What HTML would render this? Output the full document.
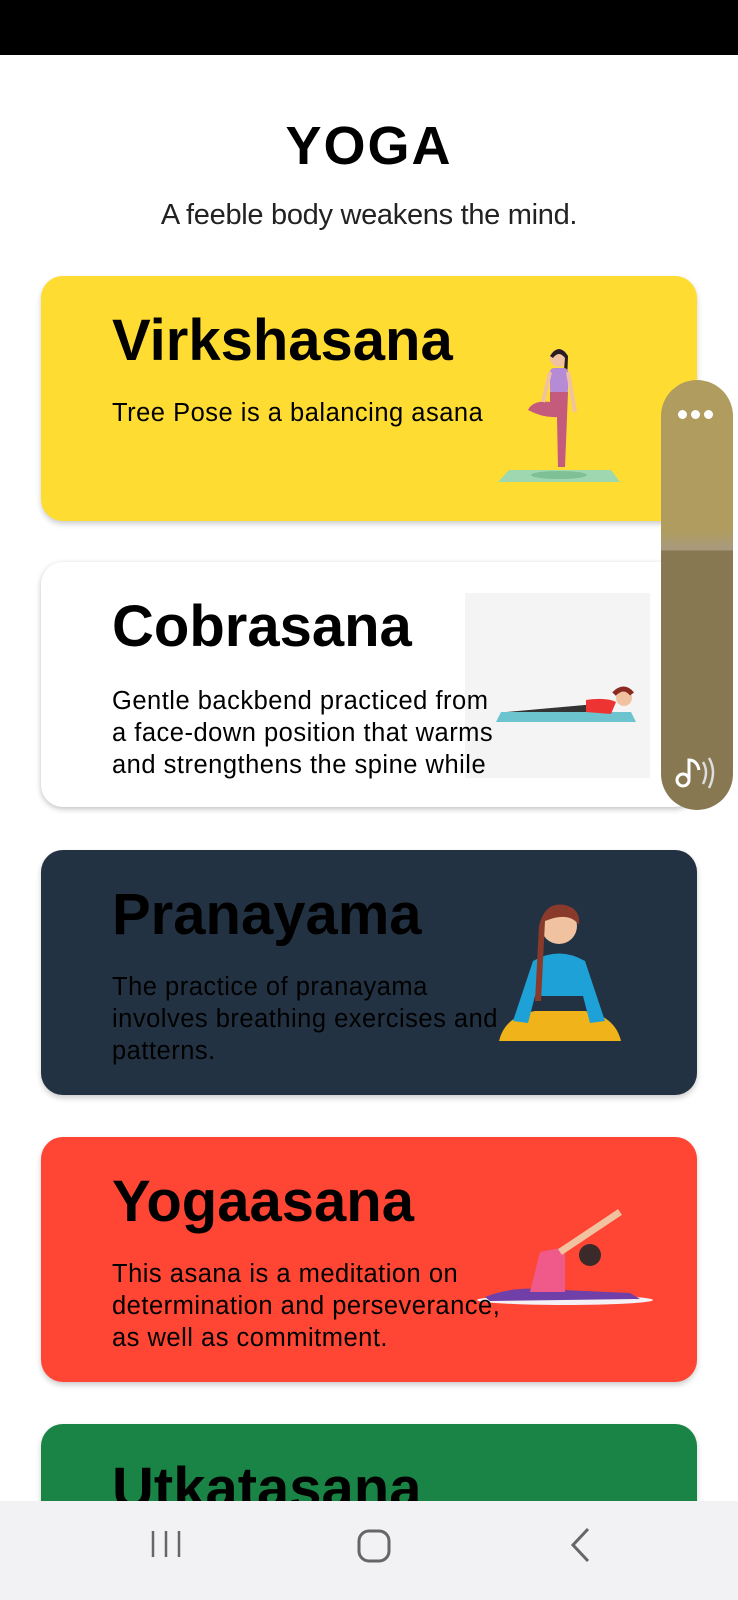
<!DOCTYPE html>
<html style="width:738px;height:1600px;overflow:hidden"><head><meta charset="utf-8"><style>
*{margin:0;padding:0;box-sizing:border-box}
body{width:738px;height:1600px;position:relative;overflow:hidden;background:#fff;font-family:"Liberation Sans",sans-serif}
.abs{position:absolute}
.card{position:absolute;left:41px;width:656px;height:245px;border-radius:22px;box-shadow:0 3px 6px rgba(0,0,0,.2);overflow:hidden}
.t{position:absolute;left:71px;top:31px;font-size:58px;font-weight:bold;color:#000}
.d{position:absolute;left:71px;font-size:25.5px;line-height:32px;color:#000;white-space:nowrap;letter-spacing:0.5px}
</style></head><body>
<div class="abs" style="left:0;top:0;width:738px;height:55px;background:#000"></div>
<div class="abs" style="left:0;top:115px;width:738px;text-align:center;font-size:54px;font-weight:bold;letter-spacing:2px">YOGA</div>
<div class="abs" style="left:0;top:199px;width:738px;text-align:center;font-size:29px;color:#222;letter-spacing:-0.3px">A feeble body weakens the mind.</div>

<div class="card" style="top:276px;background:#fedc32">
<div class="t">Virkshasana</div>
<div class="d" style="top:121px">Tree Pose is a balancing asana</div>
<svg class="abs" style="left:452px;top:66px" width="132" height="145">
<polygon points="5,140 127,140 118,128 16,128" fill="#9fd8b0"/>
<ellipse cx="66" cy="133" rx="28" ry="4" fill="#7fc095"/>
<circle cx="66" cy="16" r="9" fill="#f1c2a0"/><path d="M57 14 Q66 0 75 14 L74 40 L70 40 L72 16 Q66 8 60 16Z" fill="#2a1d1d"/>
<rect x="57" y="26" width="18" height="26" rx="4" fill="#b48bd4"/>
<path d="M57 50 L75 50 L72 125 L65 125 L64 75 Q50 76 35 68 Q40 58 57 60Z" fill="#c45a7c"/>
<path d="M57 30 L50 60 M75 30 L82 70" stroke="#f1c2a0" stroke-width="4"/>
</svg>
</div>

<div class="card" style="top:562px;background:#fff;box-shadow:0 2px 6px rgba(0,0,0,.25)">
<div class="abs" style="left:424px;top:31px;width:185px;height:185px;background:#f4f4f5"></div>
<svg class="abs" style="left:445px;top:120px" width="160" height="45">
<polygon points="10,40 150,40 145,30 15,30" fill="#6cc4cf"/>
<path d="M20 30 L110 22 L120 30 Z" fill="#333"/>
<path d="M100 18 Q120 15 130 20 L125 32 L100 30Z" fill="#e33"/>
<circle cx="138" cy="16" r="8" fill="#f1c2a0"/><path d="M128 12 Q138 2 146 12" stroke="#8a2a20" stroke-width="5" fill="none"/>
</svg>
<div class="t">Cobrasana</div>
<div class="d" style="top:123px;height:100px;overflow:hidden">Gentle backbend practiced from<br>a face-down position that warms<br>and strengthens the spine while<br>opening the chest</div>
</div>

<div class="card" style="top:850px;background:#233243">
<div class="t">Pranayama</div>
<div class="d" style="top:121px">The practice of pranayama<br>involves breathing exercises and<br>patterns.</div>
<svg class="abs" style="left:454px;top:51px" width="130" height="152">
<path d="M4 140 Q10 115 40 110 L90 110 Q120 115 126 140Z" fill="#f0b31a"/>
<path d="M38 60 Q64 45 90 60 L110 120 L95 122 L88 95 L40 95 L33 122 L18 120Z" fill="#1da1d6"/>
<circle cx="64" cy="25" r="18" fill="#f1c2a0"/>
<path d="M44 25 Q50 0 70 4 Q86 8 84 24 Q74 10 50 20 L46 100 L40 100Z" fill="#8a3a2a"/>
</svg>
</div>

<div class="card" style="top:1137px;background:#ff4533">
<div class="t">Yogaasana</div>
<svg class="abs" style="left:429px;top:70px" width="186" height="105">
<ellipse cx="95" cy="93" rx="88" ry="5" fill="#f4f0f4"/>
<path d="M15 90 Q40 80 70 82 L160 86 L170 92 L20 94Z" fill="#7040a8"/>
<path d="M60 85 L70 45 L95 40 L95 85Z" fill="#f05a8a"/>
<path d="M90 45 L150 5" stroke="#f1c2a0" stroke-width="7"/>
<circle cx="120" cy="48" r="11" fill="#3a2a2a"/>
</svg>
<div class="d" style="top:121px">This asana is a meditation on<br>determination and perseverance,<br>as well as commitment.</div>
</div>

<div class="card" style="top:1424px;height:176px;border-radius:22px 22px 0 0;background:#1a8446">
<div class="t">Utkatasana</div>
</div>

<div class="abs" style="left:661px;top:380px;width:72px;height:430px;border-radius:36px;overflow:hidden;background:linear-gradient(#b09c5e,#b09c5e 35%,#a89a80 170px,#877852 171px,#877852)">
<div class="abs" style="left:17px;top:30px;font-size:0">
<span style="display:inline-block;width:9px;height:9px;border-radius:50%;background:#fff;margin-right:4px"></span><span style="display:inline-block;width:9px;height:9px;border-radius:50%;background:#fff;margin-right:4px"></span><span style="display:inline-block;width:9px;height:9px;border-radius:50%;background:#fff"></span></div>
<svg class="abs" style="left:12px;top:372px" width="48" height="40"><circle cx="10" cy="28" r="6" stroke="#fff" stroke-width="3" fill="none"/><path d="M16 28 L16 8 Q24 8 26 18" stroke="#fff" stroke-width="3" fill="none"/><path d="M30 10 Q36 20 30 32 M36 6 Q44 20 36 36" stroke="#ddd" stroke-width="2.5" fill="none"/></svg>
</div>

<div class="abs" style="left:0;top:1501px;width:738px;height:99px;background:#f2f2f4"></div>
<svg class="abs" style="left:0;top:1501px" width="738" height="99">
<path d="M153 30 V56 M166 30 V56 M179 30 V56" stroke="#666" stroke-width="2.5"/>
<rect x="359" y="30" width="30" height="30" rx="10" stroke="#666" stroke-width="3" fill="none"/>
<path d="M588 28 L573 44 L588 60" stroke="#666" stroke-width="3" fill="none"/>
</svg>
</body></html>
